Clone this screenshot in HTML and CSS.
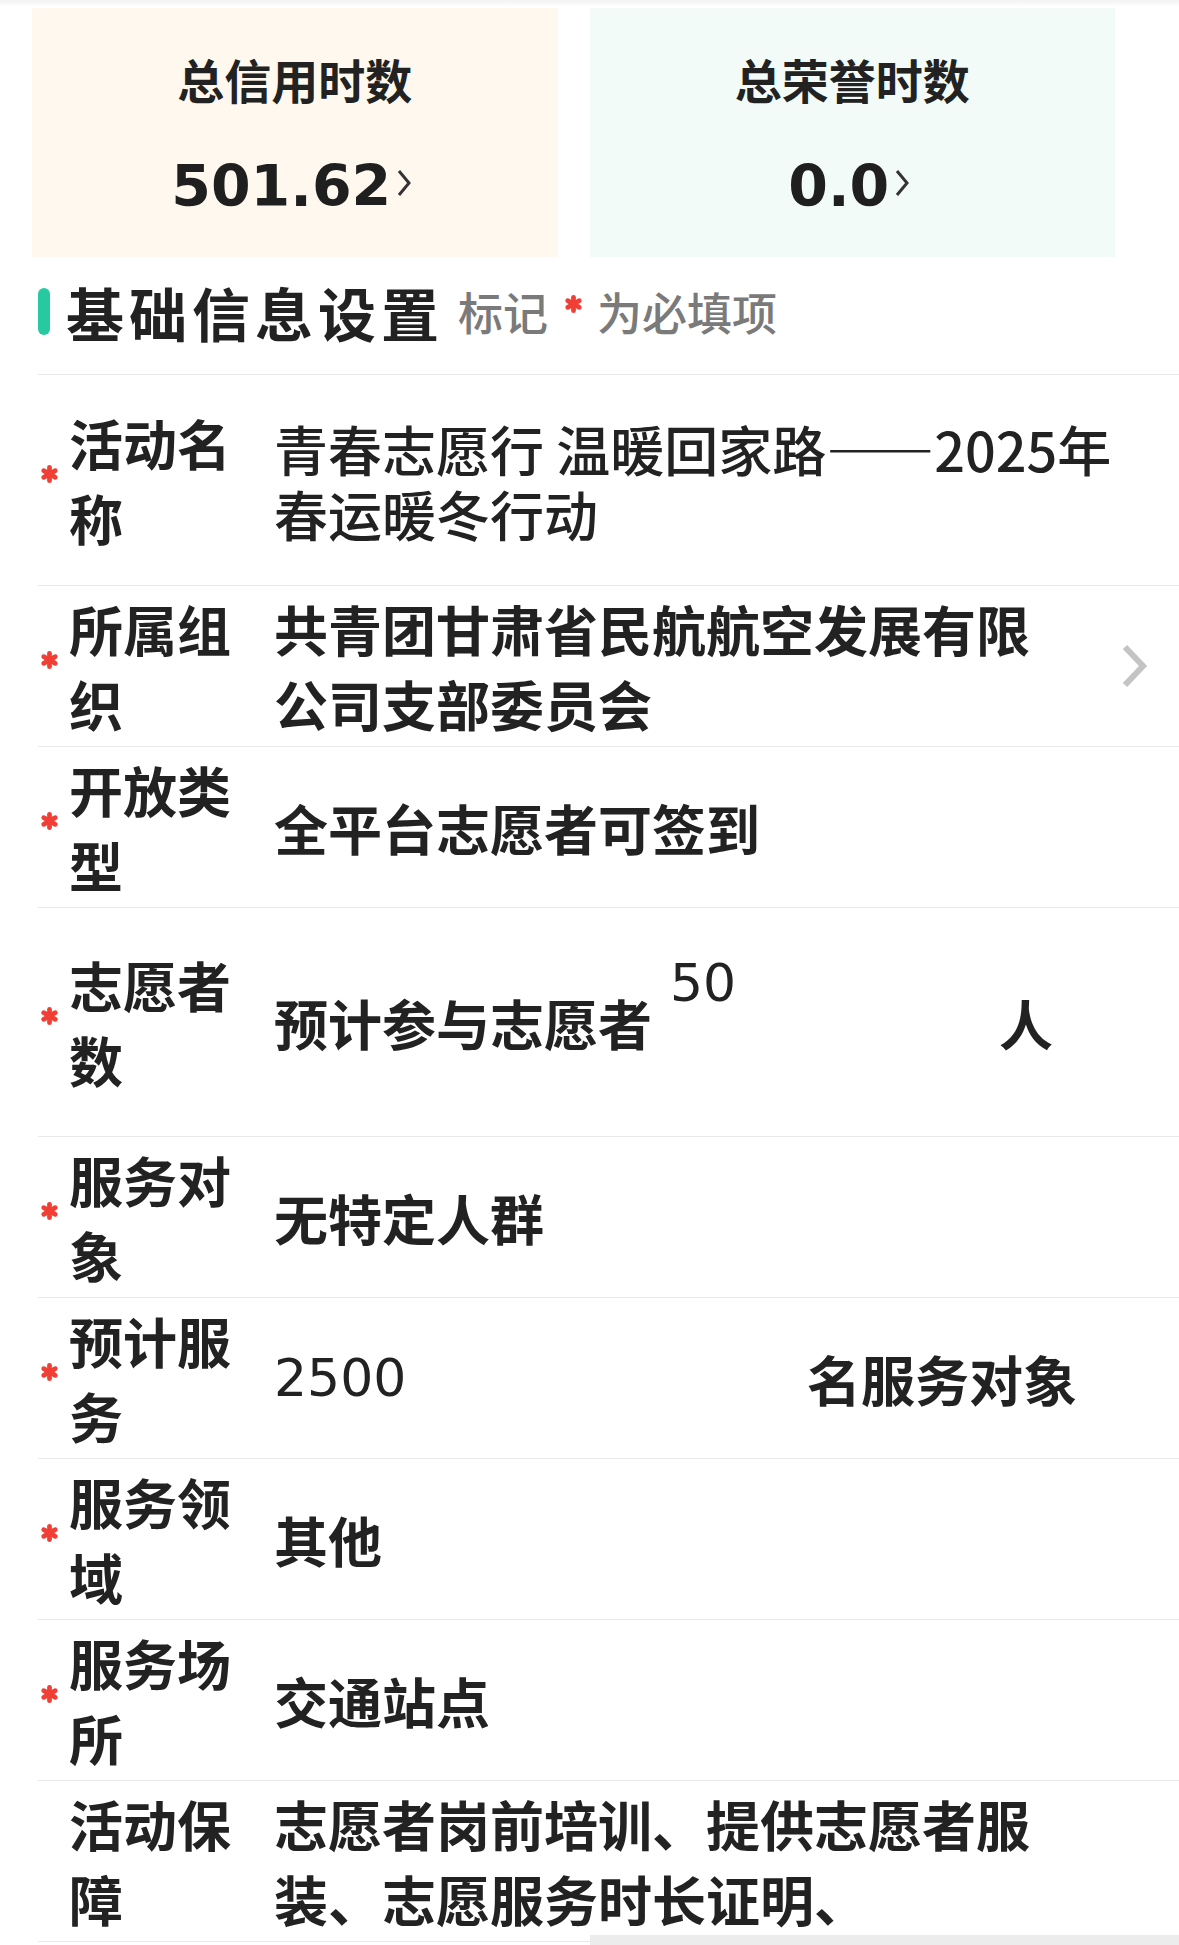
FILE: index.html
```html
<!DOCTYPE html>
<html lang="zh-CN">
<head>
<meta charset="utf-8">
<title>基础信息设置</title>
<link rel="stylesheet" href="styles.css">
</head>
<body>
<div class="page">
  <div class="stats">
    <div class="card card-credit">
      <div class="card-title">总信用时数</div>
      <div class="card-num"><span>501.62</span><svg class="card-arrow" viewBox="0 0 17 30" width="17" height="30"><polyline points="4,3 14,15 4,27" fill="none" stroke="#333" stroke-width="3"/></svg></div>
    </div>
    <div class="card card-honor">
      <div class="card-title">总荣誉时数</div>
      <div class="card-num"><span>0.0</span><svg class="card-arrow" viewBox="0 0 17 30" width="17" height="30"><polyline points="4,3 14,15 4,27" fill="none" stroke="#333" stroke-width="3"/></svg></div>
    </div>
  </div>

  <div class="form">
    <div class="sec-head">
      <span class="sec-bar"></span>
      <h2 class="sec-title">基础信息设置</h2>
      <span class="sec-tip">标记<svg class="tip-star" viewBox="0 0 20 20" width="19" height="20"><g stroke="#f13f35" stroke-width="5" stroke-linecap="round"><line x1="10" y1="3" x2="10" y2="17"/><line x1="3.9" y1="6.5" x2="16.1" y2="13.5"/><line x1="3.9" y1="13.5" x2="16.1" y2="6.5"/></g></svg>为必填项</span>
    </div>

    <div class="row row-name">
      <div class="req"><svg class="star" viewBox="0 0 20 20" width="19" height="20"><g stroke="#f13f35" stroke-width="5" stroke-linecap="round"><line x1="10" y1="3" x2="10" y2="17"/><line x1="3.9" y1="6.5" x2="16.1" y2="13.5"/><line x1="3.9" y1="13.5" x2="16.1" y2="6.5"/></g></svg></div>
      <div class="label">活动名称</div>
      <div class="value value-area">青春志愿行 温暖回家路——2025年春运暖冬行动</div>
    </div>

    <div class="row">
      <div class="req"><svg class="star" viewBox="0 0 20 20" width="19" height="20"><g stroke="#f13f35" stroke-width="5" stroke-linecap="round"><line x1="10" y1="3" x2="10" y2="17"/><line x1="3.9" y1="6.5" x2="16.1" y2="13.5"/><line x1="3.9" y1="13.5" x2="16.1" y2="6.5"/></g></svg></div>
      <div class="label">所属组织</div>
      <div class="value value-wrap">共青团甘肃省民航航空发展有限公司支部委员会</div>
      <svg class="row-arrow" viewBox="0 0 28 46" width="28" height="46"><polyline points="5,4 23,23 5,42" fill="none" stroke="#c4c4c4" stroke-width="6"/></svg>
    </div>

    <div class="row">
      <div class="req"><svg class="star" viewBox="0 0 20 20" width="19" height="20"><g stroke="#f13f35" stroke-width="5" stroke-linecap="round"><line x1="10" y1="3" x2="10" y2="17"/><line x1="3.9" y1="6.5" x2="16.1" y2="13.5"/><line x1="3.9" y1="13.5" x2="16.1" y2="6.5"/></g></svg></div>
      <div class="label">开放类型</div>
      <div class="value">全平台志愿者可签到</div>
    </div>

    <div class="row">
      <div class="req"><svg class="star" viewBox="0 0 20 20" width="19" height="20"><g stroke="#f13f35" stroke-width="5" stroke-linecap="round"><line x1="10" y1="3" x2="10" y2="17"/><line x1="3.9" y1="6.5" x2="16.1" y2="13.5"/><line x1="3.9" y1="13.5" x2="16.1" y2="6.5"/></g></svg></div>
      <div class="label">志愿者数</div>
      <div class="value value-count">
        <span>预计参与志愿者</span>
        <span class="num-input num-tall">50</span>
        <span>人</span>
      </div>
    </div>

    <div class="row">
      <div class="req"><svg class="star" viewBox="0 0 20 20" width="19" height="20"><g stroke="#f13f35" stroke-width="5" stroke-linecap="round"><line x1="10" y1="3" x2="10" y2="17"/><line x1="3.9" y1="6.5" x2="16.1" y2="13.5"/><line x1="3.9" y1="13.5" x2="16.1" y2="6.5"/></g></svg></div>
      <div class="label">服务对象</div>
      <div class="value">无特定人群</div>
    </div>

    <div class="row">
      <div class="req"><svg class="star" viewBox="0 0 20 20" width="19" height="20"><g stroke="#f13f35" stroke-width="5" stroke-linecap="round"><line x1="10" y1="3" x2="10" y2="17"/><line x1="3.9" y1="6.5" x2="16.1" y2="13.5"/><line x1="3.9" y1="13.5" x2="16.1" y2="6.5"/></g></svg></div>
      <div class="label">预计服务</div>
      <div class="value value-count">
        <span class="num-input num-wide">2500</span>
        <span>名服务对象</span>
      </div>
    </div>

    <div class="row">
      <div class="req"><svg class="star" viewBox="0 0 20 20" width="19" height="20"><g stroke="#f13f35" stroke-width="5" stroke-linecap="round"><line x1="10" y1="3" x2="10" y2="17"/><line x1="3.9" y1="6.5" x2="16.1" y2="13.5"/><line x1="3.9" y1="13.5" x2="16.1" y2="6.5"/></g></svg></div>
      <div class="label">服务领域</div>
      <div class="value">其他</div>
    </div>

    <div class="row">
      <div class="req"><svg class="star" viewBox="0 0 20 20" width="19" height="20"><g stroke="#f13f35" stroke-width="5" stroke-linecap="round"><line x1="10" y1="3" x2="10" y2="17"/><line x1="3.9" y1="6.5" x2="16.1" y2="13.5"/><line x1="3.9" y1="13.5" x2="16.1" y2="6.5"/></g></svg></div>
      <div class="label">服务场所</div>
      <div class="value">交通站点</div>
    </div>

    <div class="row row-last">
      <div class="req"></div>
      <div class="label">活动保障</div>
      <div class="value value-wrap">志愿者岗前培训、提供志愿者服装、志愿服务时长证明、</div>
    </div>
  </div>

  <div class="footer-bar"></div>
</div>
</body>
</html>
```

FILE: styles.css
```css
* {
  box-sizing: border-box;
}

html, body {
  margin: 0;
  padding: 0;
  background: #ffffff;
}

body {
  font-family: "Noto Sans CJK SC", "Noto Sans", sans-serif;
  color: #222222;
}

.page {
  width: 1179px;
}

/* ---------- stat cards ---------- */
.stats {
  display: flex;
  gap: 32px;
  padding: 8px 64px 0 32px;
  background: linear-gradient(#f2f2f2 0px, #ffffff 7px);
}

.card {
  flex: 1;
  height: 249px;
  display: flex;
  flex-direction: column;
  align-items: center;
  padding-top: 47px;
}

.card-credit {
  background: #fef8ef;
}

.card-honor {
  background: #f2fbf8;
}

.card-title {
  font-size: 47px;
  line-height: 47px;
  font-weight: 700;
  color: #222;
}

.card-num {
  margin-top: 56px;
  margin-right: 6px;
  display: flex;
  align-items: center;
  font-family: "DejaVu Sans", sans-serif;
  font-weight: 700;
  font-size: 57px;
  line-height: 56px;
  color: #1f1f1f;
}

.card-arrow {
  margin-left: 4px;
  margin-top: -6px;
}

/* ---------- form ---------- */
.form {
  margin-left: 38px;
}

.sec-head {
  height: 118px;
  display: flex;
  align-items: center;
  padding-bottom: 7px;
  border-bottom: 1px solid #e9e9e9;
}

.sec-bar {
  width: 12px;
  height: 47px;
  border-radius: 6px;
  background: #27c9a1;
  margin-bottom: 2px;
}

.sec-title {
  margin: 0 0 0 16px;
  font-size: 58px;
  line-height: 70px;
  font-weight: 700;
  letter-spacing: 5px;
  color: #222;
}

.sec-tip {
  margin-left: 14px;
  display: flex;
  align-items: center;
  font-size: 45px;
  line-height: 60px;
  font-weight: 500;
  color: #7a7a7a;
}

.tip-star {
  flex: none;
  margin: 0 14px 16px 16px;
}

.row {
  display: flex;
  align-items: center;
  padding: 5px 0;
  border-bottom: 1px solid #e9e9e9;
}

.req {
  width: 31px;
  flex: none;
  display: flex;
  align-items: center;
}

.star {
  margin-left: 2px;
  margin-bottom: 13px;
}

.label {
  width: 165px;
  flex: none;
  font-size: 54px;
  line-height: 75px;
  font-weight: 700;
  color: #222;
}

.value {
  margin-left: 40px;
  font-size: 54px;
  line-height: 75px;
  font-weight: 700;
  color: #222;
}

.value-area {
  width: 870px;
  min-height: 200px;
  padding-top: 2px;
  display: flex;
  align-items: center;
  font-weight: 500;
  line-height: 65px;
  color: #222;
}

.value-wrap {
  width: 770px;
}

.row-arrow {
  margin-left: auto;
  margin-right: 31px;
  flex: none;
}

.value-count {
  display: flex;
  align-items: center;
}

.num-input {
  font-family: "DejaVu Sans", sans-serif;
  font-weight: 400;
  font-size: 52px;
  line-height: 52px;
  color: #222;
}

.num-tall {
  width: 329px;
  height: 218px;
  margin-left: 18px;
  padding-top: 44px;
}

.num-wide {
  width: 533px;
}

.footer-bar {
  position: fixed;
  left: 590px;
  right: 0;
  bottom: 0;
  height: 10px;
  background: #ececec;
}
```
